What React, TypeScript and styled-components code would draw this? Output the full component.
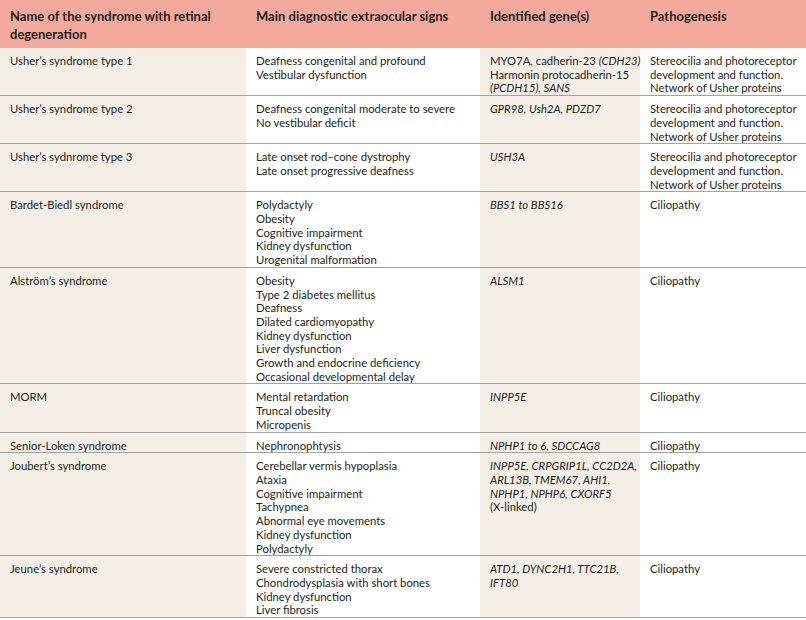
import React from "react";
import styled, { createGlobalStyle } from "styled-components";

const Global = createGlobalStyle`
  html, body { margin: 0; padding: 0; background: #ffffff; }
  body { font-family: Lato, "Open Sans", sans-serif; color: #231f20; }
`;

const Table = styled.table`
  width: 806px;
  border-collapse: collapse;
  table-layout: fixed;
  font-size: 11.3px;
`;

const HeadRow = styled.tr`
  background: #f3a99c;
`;

const Th = styled.th`
  text-align: left;
  vertical-align: top;
  font-weight: 700;
  font-size: 13px;
  line-height: 18px;
  padding: 7px 10px 5px;
  height: 36px;
`;

const Row = styled.tr`
  border-bottom: 1px solid #a3a3a3;
`;

const Td = styled.td<{ $tint?: boolean }>`
  vertical-align: top;
  padding: 6px 10px 0;
  line-height: 13.7px;
  background: ${(p) => (p.$tint ? "#f3efe7" : "#ffffff")};
`;

const Line = styled.span`
  display: block;
  white-space: nowrap;
`;

const Gene = styled.i`
  font-style: italic;
`;

type Cell = React.ReactNode[];

interface RowData {
  name: string;
  signs: Cell;
  genes: Cell;
  path: Cell;
}

const usherPath = [
  "Stereocilia and photoreceptor",
  "development and function.",
  "Network of Usher proteins",
];

const rows: RowData[] = [
  {
    name: "Usher’s syndrome type 1",
    signs: ["Deafness congenital and profound", "Vestibular dysfunction"],
    genes: [
      <>MYO7A, cadherin-23 <Gene>(CDH23)</Gene></>,
      "Harmonin protocadherin-15",
      <Gene>(PCDH15), SANS</Gene>,
    ],
    path: usherPath,
  },
  {
    name: "Usher’s syndrome type 2",
    signs: ["Deafness congenital moderate to severe", "No vestibular deficit"],
    genes: [<Gene>GPR98, Ush2A, PDZD7</Gene>],
    path: usherPath,
  },
  {
    name: "Usher’s sydnrome type 3",
    signs: ["Late onset rod–cone dystrophy", "Late onset progressive deafness"],
    genes: [<Gene>USH3A</Gene>],
    path: usherPath,
  },
  {
    name: "Bardet-Biedl syndrome",
    signs: [
      "Polydactyly",
      "Obesity",
      "Cognitive impairment",
      "Kidney dysfunction",
      "Urogenital malformation",
    ],
    genes: [<Gene>BBS1 to BBS16</Gene>],
    path: ["Ciliopathy"],
  },
  {
    name: "Alström’s syndrome",
    signs: [
      "Obesity",
      "Type 2 diabetes mellitus",
      "Deafness",
      "Dilated cardiomyopathy",
      "Kidney dysfunction",
      "Liver dysfunction",
      "Growth and endocrine deficiency",
      "Occasional developmental delay",
    ],
    genes: [<Gene>ALSM1</Gene>],
    path: ["Ciliopathy"],
  },
  {
    name: "MORM",
    signs: ["Mental retardation", "Truncal obesity", "Micropenis"],
    genes: [<Gene>INPP5E</Gene>],
    path: ["Ciliopathy"],
  },
  {
    name: "Senior-Loken syndrome",
    signs: ["Nephronophtysis"],
    genes: [<Gene>NPHP1 to 6, SDCCAG8</Gene>],
    path: ["Ciliopathy"],
  },
  {
    name: "Joubert’s syndrome",
    signs: [
      "Cerebellar vermis hypoplasia",
      "Ataxia",
      "Cognitive impairment",
      "Tachypnea",
      "Abnormal eye movements",
      "Kidney dysfunction",
      "Polydactyly",
    ],
    genes: [
      <Gene>INPP5E, CRPGRIP1L, CC2D2A,</Gene>,
      <Gene>ARL13B, TMEM67, AHI1,</Gene>,
      <Gene>NPHP1, NPHP6, CXORF5</Gene>,
      "(X-linked)",
    ],
    path: ["Ciliopathy"],
  },
  {
    name: "Jeune’s syndrome",
    signs: [
      "Severe constricted thorax",
      "Chondrodysplasia with short bones",
      "Kidney dysfunction",
      "Liver fibrosis",
    ],
    genes: [<Gene>ATD1, DYNC2H1, TTC21B,</Gene>, <Gene>IFT80</Gene>],
    path: ["Ciliopathy"],
  },
];

const Lines = ({ items }: { items: Cell }) => (
  <>
    {items.map((it, i) => (
      <Line key={i}>{it}</Line>
    ))}
  </>
);

export default function App() {
  return (
    <>
      <Global />
      <Table>
        <colgroup>
          <col style={{ width: 246 }} />
          <col style={{ width: 234 }} />
          <col style={{ width: 160 }} />
          <col style={{ width: 166 }} />
        </colgroup>
        <thead>
          <HeadRow>
            <Th>
              Name of the syndrome with retinal
              <br />
              degeneration
            </Th>
            <Th>Main diagnostic extraocular signs</Th>
            <Th>Identified gene(s)</Th>
            <Th>Pathogenesis</Th>
          </HeadRow>
        </thead>
        <tbody>
          {rows.map((r) => (
            <Row key={r.name}>
              <Td $tint>{r.name}</Td>
              <Td>
                <Lines items={r.signs} />
              </Td>
              <Td $tint>
                <Lines items={r.genes} />
              </Td>
              <Td>
                <Lines items={r.path} />
              </Td>
            </Row>
          ))}
        </tbody>
      </Table>
    </>
  );
}
